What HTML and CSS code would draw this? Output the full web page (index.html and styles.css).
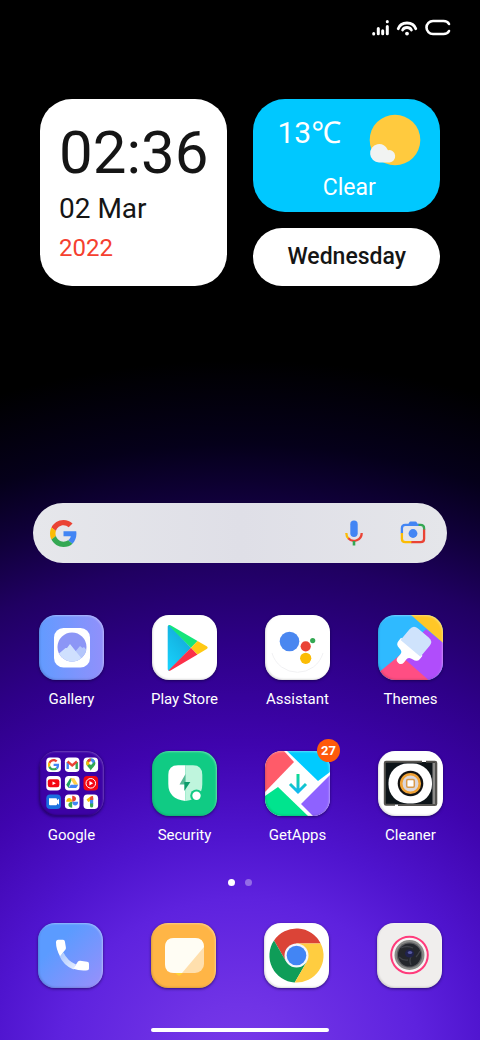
FILE: index.html
```html
<!DOCTYPE html>
<html lang="en">
<head>
  <meta charset="UTF-8">
  <meta name="viewport" content="width=device-width, initial-scale=1">
  <title>Home</title>
  <link rel="stylesheet" href="styles.css">
</head>
<body>
  <!-- shared shapes -->
  <svg class="defs" width="0" height="0" aria-hidden="true">
    <symbol id="g-logo" viewBox="0 0 48 48">
      <path fill="#ea4335" d="M24 9.5c3.54 0 6.71 1.22 9.21 3.6l6.85-6.85C35.9 2.38 30.47 0 24 0 14.62 0 6.51 5.38 2.56 13.22l7.98 6.19C12.43 13.72 17.74 9.5 24 9.5z"/>
      <path fill="#4285f4" d="M46.98 24.55c0-1.57-.15-3.09-.38-4.55H24v9.02h12.94c-.58 2.96-2.26 5.48-4.78 7.18l7.73 6c4.51-4.18 7.09-10.36 7.09-17.65z"/>
      <path fill="#fbbc05" d="M10.53 28.59c-.48-1.45-.76-2.99-.76-4.59s.27-3.14.76-4.59l-7.98-6.19C.92 16.46 0 20.12 0 24c0 3.88.92 7.54 2.56 10.78l7.97-6.19z"/>
      <path fill="#34a853" d="M24 48c6.48 0 11.93-2.13 15.89-5.81l-7.73-6c-2.15 1.45-4.92 2.3-8.16 2.3-6.26 0-11.57-4.22-13.47-9.91l-7.98 6.19C6.51 42.62 14.62 48 24 48z"/>
    </symbol>
  </svg>

  <header class="status">
    <svg width="17" height="17" viewBox="0 0 17 17" stroke="#fff" stroke-width="3" stroke-linecap="round" aria-label="Signal">
      <path d="M1.700 15v-.6M6.300 14.800V9.500M10.700 14.800v-3M15.300 14.800V7.500M15.300 2.600v.2"/>
    </svg>
    <svg width="22" height="17" viewBox="0 0 22 17" fill="none" stroke="#fff" stroke-width="2.800" stroke-linecap="round" aria-label="Wi-Fi">
      <path d="M2.200 9.800a9.200 8.200 0 0 1 17.600 0M6.600 11a4.800 4.200 0 0 1 8.800 0"/>
      <circle cx="11" cy="14.600" r="1.900" fill="#fff" stroke="none"/>
    </svg>
    <svg width="26" height="17" viewBox="0 0 26 17" fill="none" stroke="#fff" stroke-width="2.600" stroke-linecap="round" aria-label="Battery">
      <path d="M24 5Q22.500 2 18.500 2H8a6.500 6.500 0 0 0 0 13h10.500q4 0 5.500-3"/>
    </svg>
  </header>

  <section class="widgets">
    <div class="card clock">
      <time class="clock-time">02:36</time>
      <div class="clock-date">02 Mar</div>
      <div class="clock-year">2022</div>
    </div>
    <div class="side">
      <div class="card weather">
        <div class="weather-top">
          <span class="temp">13℃</span>
          <svg width="52" height="52" viewBox="0 0 52 52" aria-hidden="true">
            <circle cx="26" cy="26" r="25.300" fill="#ffca3e"/>
            <path fill="#f1f3f2" d="M10 48.500a9.200 9.200 0 1 1 9-12.300 6.200 6.200 0 1 1 1.500 12.300z"/>
          </svg>
        </div>
        <div class="weather-text">Clear</div>
      </div>
      <div class="card weekday">Wednesday</div>
    </div>
  </section>

  <form class="search" role="search">
    <svg width="27" height="27" aria-hidden="true"><use href="#g-logo"/></svg>
    <input type="search" class="search-input" aria-label="Search">
    <button type="button" class="search-btn" aria-label="Voice search">
      <svg width="26" height="26" viewBox="0 0 26 26" fill="none" stroke-width="2.300">
        <rect x="9.300" y=".5" width="7.400" height="16.500" rx="3.700" fill="#4285f4"/>
        <path stroke="#fbbc05" d="M5.300 13c0 2.300.9 4.200 2.300 5.500"/>
        <path stroke="#ea4335" d="M7.300 18.200a7.700 7.700 0 0 0 13.400-5.200"/>
        <path stroke="#34a853" stroke-width="2.600" d="M13 21v4.500"/>
      </svg>
    </button>
    <button type="button" class="search-btn" aria-label="Search with camera">
      <svg width="26" height="26" viewBox="0 0 26 26" fill="none" stroke-width="2.300">
        <path fill="#4285f4" d="M8 4.800 9.200 2.400q.4-.9 1.400-.9h4.800q1 0 1.400.9L18 4.800z"/>
        <path stroke="#4285f4" d="M1.900 13.500V8.300q0-3.500 3.500-3.500H19"/>
        <path stroke="#34a853" d="M18.500 4.800h2q3.600 0 3.600 3.500V10"/>
        <path stroke="#ea4335" d="M24.100 9.500v9.200q0 3.500-3.600 3.500H11"/>
        <path stroke="#fbbc05" d="M1.900 13v5.700q0 3.500 3.500 3.500h6"/>
        <circle cx="13" cy="13.500" r="4.400" fill="#4285f4"/>
      </svg>
    </button>
  </form>

  <nav class="apps" aria-label="Apps">
    <a class="app" href="#gallery">
      <span class="tile tile-gallery">
        <svg viewBox="0 0 65 65">
          <clipPath id="lens"><circle cx="33" cy="32" r="14.500"/></clipPath>
          <rect x="15" y="13" width="36" height="39.500" rx="9.500" fill="#fff"/>
          <g clip-path="url(#lens)">
            <path fill="#8c96f6" d="M15 15h36v36H15z"/>
            <path fill="#b4c6fb" d="M30 44 41 31l2.500 2 1.500-1 7 8v9H30z"/>
            <path fill="#cfe0fe" d="m17 41 9.500-8 1.500 0 3-4 12 15v6H17z"/>
          </g>
        </svg>
      </span>
      <span class="label">Gallery</span>
    </a>
    <a class="app" href="#play">
      <span class="tile">
        <svg viewBox="0 0 65 65">
          <linearGradient id="play-blue" x1="0" y1="1" x2=".6" y2="0"><stop stop-color="#18d4ff"/><stop offset="1" stop-color="#13a9d8"/></linearGradient>
          <path fill="url(#play-blue)" d="M15.700 11.500q0-1.500 1.500-1.500L39 32.700 17.200 55.700q-1.500 0-1.500-1.500z"/>
          <path fill="#14e57b" d="M16.500 10.200q.9-.5 2 .1L45.500 26 39 32.700z"/>
          <path fill="#fb3049" d="M16.500 55.500q.9.500 2-.1L45.500 39.600 39 32.700z"/>
          <path fill="#ffc914" d="M45.500 26 54.700 31.300q2 1.400 0 2.800L45.500 39.600 39 32.700z"/>
        </svg>
      </span>
      <span class="label">Play Store</span>
    </a>
    <a class="app" href="#assistant">
      <span class="tile">
        <svg viewBox="0 0 65 65">
          <path fill="none" stroke="#f1f1f3" d="M7 38a26.500 26.500 0 0 0 51 0"/>
          <circle cx="24.500" cy="26.500" r="9.800" fill="#4a87f0"/>
          <circle cx="40.700" cy="31.300" r="5.100" fill="#ea4335"/>
          <circle cx="47.700" cy="25.600" r="2.600" fill="#34a853"/>
          <circle cx="40.700" cy="43.300" r="5.600" fill="#fbbc05"/>
        </svg>
      </span>
      <span class="label">Assistant</span>
    </a>
    <a class="app" href="#themes">
      <span class="tile tile-themes">
        <svg viewBox="0 0 65 65">
          <path fill="#ffc727" d="M33 0h32v28z"/>
          <path fill="#b04dfb" d="m48 14 17 14v37H50L20 42z"/>
          <path fill="#ff4e83" d="m0 58 22-18 28.500 25H0z"/>
          <g transform="translate(37 28) rotate(40)">
            <path fill="#fff" d="M-14 5h28v4q0 4.500-5 5-5 .2-5 4v4a4 4 0 0 1-8 0v-4q0-3.800-5-4-5-.5-5-5z"/>
            <path fill="#cfe3fc" d="M-13-7q0-6 6-6H7q6 0 6 6V7h-26z"/>
          </g>
        </svg>
      </span>
      <span class="label">Themes</span>
    </a>
    <a class="app" href="#google">
      <span class="tile tile-folder">
        <svg viewBox="0 0 65 65">
          <g fill="#fff">
            <rect x="7.300" y="6.500" width="14.600" height="14.600" rx="3.800"/>
            <rect x="25.900" y="6.500" width="14.600" height="14.600" rx="3.800"/>
            <rect x="44.500" y="6.500" width="14.600" height="14.600" rx="3.800"/>
            <rect x="7.300" y="25" width="14.600" height="14.600" rx="3.800"/>
            <rect x="25.900" y="25" width="14.600" height="14.600" rx="3.800"/>
            <rect x="44.500" y="25" width="14.600" height="14.600" rx="3.800" fill="#f40612"/>
            <rect x="7.300" y="43.500" width="14.600" height="14.600" rx="3.800" fill="#1a6fe0"/>
            <rect x="25.900" y="43.500" width="14.600" height="14.600" rx="3.800"/>
            <rect x="44.500" y="43.500" width="14.600" height="14.600" rx="3.800"/>
          </g>
          <use href="#g-logo" x="8.800" y="8" width="11.600" height="11.600"/>
          <!-- mail -->
          <g fill="none" stroke-width="2.400">
            <path stroke="#4285f4" d="M28.700 18V11"/>
            <path stroke="#34a853" d="M37.700 18V11"/>
            <path stroke="#ea4335" d="m28.500 10.500 4.700 4 4.700-4"/>
          </g>
          <!-- maps -->
          <path fill="#34a853" d="M51.800 19.700c-.6-2.600-4.600-4.500-4.600-7.500a4.600 4.600 0 0 1 9.200 0c0 3-4 4.900-4.600 7.500z"/>
          <path fill="#4285f4" d="M51.800 7.600a4.600 4.600 0 0 1 4.300 2.900L51.800 14z"/>
          <path fill="#ea4335" d="M51.800 7.600a4.600 4.600 0 0 0-4 2.300l4 3z"/>
          <path fill="#fbbc05" d="M47.800 9.900a4.600 4.600 0 0 0 .3 4.900l3.700-2.600z"/>
          <circle cx="51.800" cy="12" r="1.700" fill="#fff"/>
          <!-- video -->
          <rect x="8.800" y="28.300" width="11.600" height="8" rx="2.200" fill="#f40612"/>
          <path fill="#fff" d="m13.500 30.500 3.400 1.800-3.400 1.800z"/>
          <!-- drive -->
          <path fill="#1ea362" d="M31.200 27.200h2L29.600 37l-2.400-3.300z"/>
          <path fill="#ffcf48" d="M31.200 27.200h4l4 6.500h-4z"/>
          <path fill="#4285f4" d="m31.700 33.700h7.600L37.200 37h-7.600z"/>
          <!-- music -->
          <circle cx="51.800" cy="32.300" r="4.800" fill="none" stroke="#fff" stroke-width="1"/>
          <path fill="#fff" d="m50.400 30 3.700 2.300-3.700 2.300z"/>
          <!-- duo -->
          <path fill="#fff" d="M10 47.300h7q1 0 1 1v1l2-1.500v6L18 52.300v1q0 1-1 1h-6q-1 0-1-1z"/>
          <!-- photos -->
          <path fill="#ea4335" d="M33.200 50.800v-6q3.800.3 3.800 3t-3.800 3z"/>
          <path fill="#4285f4" d="M33.200 50.800h6q-.3 3.800-3 3.800t-3-3.800z"/>
          <path fill="#34a853" d="M33.200 50.800v6q-3.800-.3-3.800-3t3.800-3z"/>
          <path fill="#fbbc05" d="M33.200 50.800h-6q.3-3.800 3-3.800t3 3.800z"/>
          <!-- one -->
          <path fill="#fbbc05" d="m47.500 48.500 4.300-3.200h2v3.500L49.300 51z"/>
          <path fill="#4285f4" d="M51 47h3.200v6H51z"/>
          <path fill="#ea4335" d="m51 46.500 2-1.400q1.200-.3 1.200 1V49H51z"/>
          <path fill="#34a853" d="M51 52.500h3.200v2.600q0 1.500-1.600 1.500T51 55.100z"/>
        </svg>
      </span>
      <span class="label">Google</span>
    </a>
    <a class="app" href="#security">
      <span class="tile tile-security">
        <svg viewBox="0 0 65 65">
          <path fill="#fff" d="M33.500 14.300H26q-9.700 0-9.700 9.700v9Q16.300 48 33.500 50z"/>
          <path fill="#bff5dd" d="M33.500 14.300H41q9.300 0 9.300 9.700v9q0 15-16.800 17z"/>
          <path fill="#55b995" d="m33.500 23-6 10.500h6z"/>
          <path fill="#0c9c6a" d="M32.300 31h6L32.300 40z"/>
          <circle cx="44.500" cy="44.700" r="6.300" fill="#10cb84"/>
          <circle cx="44.500" cy="44.700" r="4.200" fill="#fff"/>
        </svg>
      </span>
      <span class="label">Security</span>
    </a>
    <a class="app" href="#getapps">
      <span class="tile">
        <svg viewBox="0 0 65 65">
          <linearGradient id="arrow" gradientUnits="userSpaceOnUse" x1="0" y1="23" x2="0" y2="41"><stop stop-color="#0fdc8e"/><stop offset="1" stop-color="#12b8f2"/></linearGradient>
          <path fill="#ff5b69" d="M0 0h19l10 11L0 41z"/>
          <path fill="#00cbff" d="M22 0h43v21L53 30z"/>
          <path fill="#8e62ff" d="M65 24v41H48L36 53z"/>
          <path fill="#00e48e" d="M0 45l13-9 30 29H0z"/>
          <path fill="none" stroke="url(#arrow)" stroke-width="3" d="M33 23v17M25 33l8 8 8-8"/>
        </svg>
      </span>
      <span class="badge">27</span>
      <span class="label">GetApps</span>
    </a>
    <a class="app" href="#cleaner">
      <span class="tile">
        <svg viewBox="0 0 65 65">
          <rect x="7" y="11" width="51" height="42.500" rx="1.500" fill="#0d1418"/>
          <path fill="#8b8a88" d="M54.500 12h3v41h-3z"/>
          <rect x="10.500" y="12.500" width="43.500" height="40" rx="19" fill="#fff"/>
          <path fill="none" stroke="#55534f" stroke-width="2" d="M44 10.700H8q-1.200 0-1.200 1.200V52.500q0 1.200 1.200 1.200h9M20 54h37q1.300 0 1.300-1.300V12q0-1.300-1.300-1.300H48"/>
          <circle cx="32.500" cy="32.500" r="12.800" fill="#121212"/>
          <circle cx="32.500" cy="32.500" r="9.300" fill="#dbd7dc" stroke="#f0a235" stroke-width="2.600"/>
          <rect x="28.700" y="28.500" width="7.600" height="7.800" rx="1.200" fill="#fff" stroke="#d99a4a" stroke-width="1.500"/>
        </svg>
      </span>
      <span class="label">Cleaner</span>
    </a>
  </nav>

  <div class="pages" aria-hidden="true">
    <span class="dot dot-on"></span>
    <span class="dot"></span>
  </div>

  <nav class="dock" aria-label="Dock">
    <a class="tile tile-phone" href="#phone" aria-label="Phone">
      <svg viewBox="0 0 65 65">
        <linearGradient id="cord" x1="0" y1="0" x2="1" y2="1"><stop stop-color="#a9c7ff"/><stop offset="1" stop-color="#e8eeff"/></linearGradient>
        <path fill="url(#cord)" d="m21.500 33 4-3.500q4 8.500 12.500 12L35.500 46.500Q25.500 42.500 21.500 33z"/>
        <path fill="#fff" d="M20.200 16.700h4.800q1.700 0 1.900 1.700l1 6q.2 1.500-.8 2.700l-5.100 6.100Q18 26 18 19.500q0-2.800 2.200-2.800z"/>
        <path fill="#fff" d="M51 45.300v-4.500q0-1.900-1.900-2.100l-6.800-.9q-1.500-.2-2.500.9L35.300 45.800Q41 48 48 47.500q3 0 3-2.200z"/>
      </svg>
    </a>
    <a class="tile tile-notes" href="#notes" aria-label="Notes">
      <svg viewBox="0 0 65 65">
        <path fill="#ffd338" d="M22 48h12l-4.500 4q-1.500 1.200-3 0z"/>
        <rect x="14" y="15" width="39" height="35" rx="9" fill="#ffdfad"/>
        <path fill="#fffdf4" d="M53 24 31 50H23q-9 0-9-9V24q0-9 9-9h21q9 0 9 9z"/>
      </svg>
    </a>
    <a class="tile" href="#chrome" aria-label="Chrome">
      <svg viewBox="0 0 65 65">
        <path fill="#db4437" d="M32.500 32.500 22.100 38.500 10 17.500A27 27 0 0 1 56.700 20.500H32.500z"/>
        <path fill="#0f9d58" d="M32.500 32.500 42.900 38.500 30.700 59.500A27 27 0 0 1 10 17.500L22.100 38.500z"/>
        <path fill="#ffcd40" d="M32.500 32.500v-12h24.200A27 27 0 0 1 30.700 59.500L42.900 38.500z"/>
        <circle cx="32.500" cy="32.500" r="12" fill="#f4f6fb"/>
        <circle cx="32.500" cy="32.500" r="9.800" fill="#4285f4"/>
      </svg>
    </a>
    <a class="tile tile-camera" href="#camera" aria-label="Camera">
      <svg viewBox="0 0 65 65">
        <circle cx="32.500" cy="32" r="18.300" fill="#f6f4f4" stroke="#ff3b7c" stroke-width="2"/>
        <circle cx="32.500" cy="32" r="15" fill="#8b8b89"/>
        <circle cx="32.500" cy="32" r="12.800" fill="#5c5d60"/>
        <circle cx="32.500" cy="32" r="11.500" fill="#24262c"/>
        <path fill="none" stroke="#3f4148" stroke-width="1.300" d="M24 25q6-3 12 0M43 28q-2 4-4 6M34 42q-2-5 0-8M22 34q4 4 9 3"/>
        <ellipse cx="32.500" cy="30.500" rx="4.500" ry="4" fill="#20224d"/>
        <ellipse cx="33" cy="29.500" rx="2.200" ry="1.500" fill="#5558a0"/>
      </svg>
    </a>
  </nav>

  <div class="home-bar"></div>
</body>
</html>
```

FILE: styles.css
```css
* {
  box-sizing: border-box;
}

body {
  margin: 0;
  min-height: 100vh;
  display: flex;
  flex-direction: column;
  font-family: Roboto, "Noto Sans", sans-serif;
  color: #fff;
  background: #000 radial-gradient(ellipse 780px 700px at 50% calc(100% + 20px),
    #7839ea 0%,
    #7033e6 8%,
    #5e22de 23%,
    #4f14ce 32%,
    #3f04ae 45%,
    #2e0088 59%,
    #200062 71%,
    #10003a 80%,
    #05001a 88%,
    #000 100%) no-repeat;
}

svg {
  display: block;
}

.defs {
  position: absolute;
}

a {
  color: inherit;
  text-decoration: none;
}

/* status bar */
.status {
  display: flex;
  justify-content: flex-end;
  gap: 7px;
  padding: 19px 29px 0;
}

/* widgets */
.widgets {
  display: grid;
  grid-template-columns: 1fr 1fr;
  gap: 26px;
  padding: 63px 40px 0;
}

.card {
  border-radius: 32px;
  background: #fff;
  color: #151515;
}

.clock {
  padding: 18px 19px;
}

.clock-time {
  display: block;
  font-size: 60px;
  line-height: 72px;
}

.clock-date {
  font-size: 28px;
  line-height: 40px;
}

.clock-year {
  font-size: 24px;
  line-height: 39px;
  color: #f5402f;
}

.side {
  display: flex;
  flex-direction: column;
  gap: 16px;
}

.weather {
  flex: 1;
  padding: 15px 19px 0 24px;
  background: #00c8ff;
  color: #fff;
}

.weather-top {
  display: flex;
  justify-content: space-between;
}

.temp {
  font-size: 30px;
  line-height: 37px;
}

.weather-text {
  font-size: 23px;
  line-height: 44px;
  text-align: center;
}

.weekday {
  font-size: 23px;
  font-weight: 500;
  line-height: 58px;
  text-align: center;
}

/* search */
.search {
  display: flex;
  align-items: center;
  gap: 33px;
  height: 60px;
  margin: auto 33px 0;
  padding: 0 21px 0 17px;
  border-radius: 30px;
  background: linear-gradient(90deg, #e6e7eb, #dfdfe7 50%, #e5e6ea);
}

.search-input {
  flex: 1;
  min-width: 0;
  border: none;
  outline: none;
  background: none;
  font: inherit;
}

.search-btn {
  padding: 0;
  border: none;
  background: none;
  cursor: pointer;
}

/* apps */
.apps,
.dock {
  display: grid;
  grid-template-columns: repeat(4, 65px);
  justify-content: space-between;
  padding: 0 38px;
}

.apps {
  row-gap: 42px;
  margin-top: 52px;
  padding: 0 37px 0 39px;
}

.app {
  position: relative;
  display: flex;
  flex-direction: column;
  align-items: center;
  gap: 9px;
}

.label {
  font-size: 15px;
  line-height: 20px;
  white-space: nowrap;
}

.tile {
  position: relative;
  width: 65px;
  height: 65px;
  border-radius: 17px;
  overflow: hidden;
  background: #fff;
  box-shadow: 0 1px 3px rgba(10, 0, 50, 0.6);
}

/* bevelled edge over the icon art */
.tile::after {
  content: "";
  position: absolute;
  inset: 0;
  border-radius: inherit;
  box-shadow: inset -1px 1px 2px rgba(255, 255, 255, 0.35), inset 1px -1px 2px rgba(0, 0, 0, 0.14);
}

.tile-gallery {
  background: linear-gradient(90deg, #629bff, #9190fb);
}

.tile-themes {
  background: #2fbaff;
}

.tile-folder {
  background: #3c02a5;
}

.tile-folder::after {
  box-shadow: inset -1px 1px 2px rgba(255, 255, 255, 0.25), inset 1px -1px 2px rgba(0, 0, 0, 0.35);
}

.tile-security {
  background: #10cb84;
}

.tile-phone {
  background: linear-gradient(135deg, #5b9bff 30%, #9a8ffb);
}

.tile-notes {
  background: #ffb546;
}

.tile-camera {
  background: #f0eeed;
}

.badge {
  position: absolute;
  top: -12px;
  right: -10px;
  width: 23px;
  height: 23px;
  border-radius: 50%;
  background: #ff5a0a;
  font-size: 13px;
  font-weight: 700;
  line-height: 23px;
  text-align: center;
}

/* page dots */
.pages {
  display: flex;
  justify-content: center;
  gap: 10px;
  margin-top: 34px;
}

.dot {
  width: 7px;
  height: 7px;
  border-radius: 50%;
  background: rgba(255, 255, 255, 0.35);
}

.dot-on {
  background: #fff;
}

.dock {
  margin-top: 37px;
}

.home-bar {
  width: 37%;
  height: 4px;
  margin: 40px auto 8px;
  border-radius: 2px;
  background: #fff;
}
```
